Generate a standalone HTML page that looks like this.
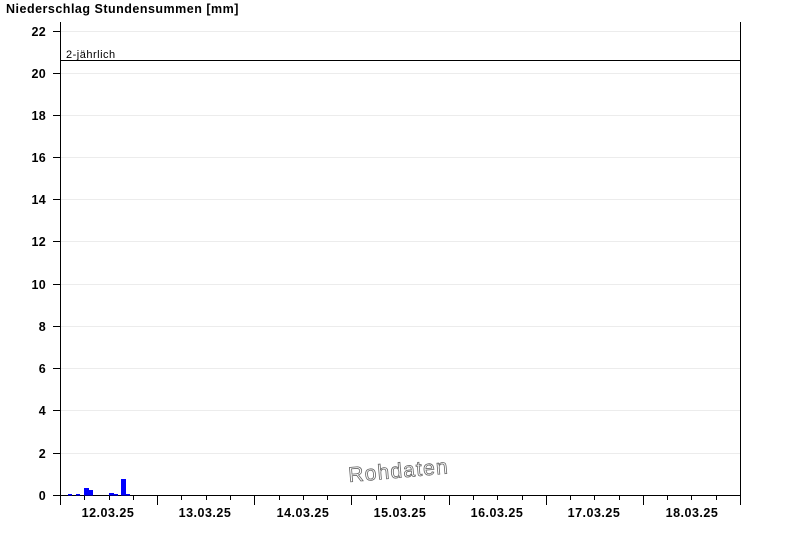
<!DOCTYPE html>
<html><head><meta charset="utf-8"><style>
html,body{margin:0;padding:0;background:#fff;}
</style></head><body>
<svg width="800" height="550" xmlns="http://www.w3.org/2000/svg" font-family="Liberation Sans, Arial, sans-serif">
<rect width="800" height="550" fill="#fff"/>
<text x="6" y="13" font-size="12.5" font-weight="bold" letter-spacing="0.5" fill="#000">Niederschlag Stundensummen [mm]</text>
<g stroke="#ececec" stroke-width="1">
<line x1="60" x2="740" y1="31.5" y2="31.5"/>
<line x1="60" x2="740" y1="73.5" y2="73.5"/>
<line x1="60" x2="740" y1="115.5" y2="115.5"/>
<line x1="60" x2="740" y1="157.5" y2="157.5"/>
<line x1="60" x2="740" y1="199.5" y2="199.5"/>
<line x1="60" x2="740" y1="241.5" y2="241.5"/>
<line x1="60" x2="740" y1="284.5" y2="284.5"/>
<line x1="60" x2="740" y1="326.5" y2="326.5"/>
<line x1="60" x2="740" y1="368.5" y2="368.5"/>
<line x1="60" x2="740" y1="410.5" y2="410.5"/>
<line x1="60" x2="740" y1="453.5" y2="453.5"/>
</g>
<g stroke="#000" stroke-width="1">
<line x1="60.5" x2="60.5" y1="22" y2="505"/>
<line x1="740.5" x2="740.5" y1="22" y2="495"/>
<line x1="53" x2="740" y1="495.5" y2="495.5"/>
<line x1="60" x2="740" y1="60.5" y2="60.5"/>
<line x1="53" x2="60" y1="31.5" y2="31.5"/>
<line x1="53" x2="60" y1="73.5" y2="73.5"/>
<line x1="53" x2="60" y1="115.5" y2="115.5"/>
<line x1="53" x2="60" y1="157.5" y2="157.5"/>
<line x1="53" x2="60" y1="199.5" y2="199.5"/>
<line x1="53" x2="60" y1="241.5" y2="241.5"/>
<line x1="53" x2="60" y1="284.5" y2="284.5"/>
<line x1="53" x2="60" y1="326.5" y2="326.5"/>
<line x1="53" x2="60" y1="368.5" y2="368.5"/>
<line x1="53" x2="60" y1="410.5" y2="410.5"/>
<line x1="53" x2="60" y1="453.5" y2="453.5"/>
<line x1="157.5" x2="157.5" y1="495" y2="505"/>
<line x1="254.5" x2="254.5" y1="495" y2="505"/>
<line x1="351.5" x2="351.5" y1="495" y2="505"/>
<line x1="449.5" x2="449.5" y1="495" y2="505"/>
<line x1="546.5" x2="546.5" y1="495" y2="505"/>
<line x1="643.5" x2="643.5" y1="495" y2="505"/>
<line x1="740.5" x2="740.5" y1="495" y2="505"/>
<g>
<line x1="84.5" x2="84.5" y1="495" y2="500"/><line x1="109.5" x2="109.5" y1="495" y2="500"/><line x1="133.5" x2="133.5" y1="495" y2="500"/>
<line x1="181.5" x2="181.5" y1="495" y2="500"/><line x1="206.5" x2="206.5" y1="495" y2="500"/><line x1="230.5" x2="230.5" y1="495" y2="500"/>
<line x1="279.5" x2="279.5" y1="495" y2="500"/><line x1="303.5" x2="303.5" y1="495" y2="500"/><line x1="327.5" x2="327.5" y1="495" y2="500"/>
<line x1="376.5" x2="376.5" y1="495" y2="500"/><line x1="400.5" x2="400.5" y1="495" y2="500"/><line x1="424.5" x2="424.5" y1="495" y2="500"/>
<line x1="473.5" x2="473.5" y1="495" y2="500"/><line x1="497.5" x2="497.5" y1="495" y2="500"/><line x1="522.5" x2="522.5" y1="495" y2="500"/>
<line x1="570.5" x2="570.5" y1="495" y2="500"/><line x1="594.5" x2="594.5" y1="495" y2="500"/><line x1="619.5" x2="619.5" y1="495" y2="500"/>
<line x1="667.5" x2="667.5" y1="495" y2="500"/><line x1="691.5" x2="691.5" y1="495" y2="500"/><line x1="716.5" x2="716.5" y1="495" y2="500"/>
</g>
</g>
<g font-size="12.5" font-weight="bold" text-anchor="end" fill="#000" letter-spacing="0.3">
<text x="46" y="36">22</text><text x="46" y="78">20</text><text x="46" y="120">18</text>
<text x="46" y="162">16</text><text x="46" y="204">14</text><text x="46" y="246">12</text>
<text x="46" y="289">10</text><text x="46" y="331">8</text><text x="46" y="373">6</text>
<text x="46" y="415">4</text><text x="46" y="458">2</text><text x="46" y="500">0</text>
</g>
<g font-size="12.5" font-weight="bold" text-anchor="middle" fill="#000" letter-spacing="0.5">
<text x="108" y="517">12.03.25</text><text x="205" y="517">13.03.25</text><text x="303" y="517">14.03.25</text>
<text x="400" y="517">15.03.25</text><text x="497" y="517">16.03.25</text><text x="594" y="517">17.03.25</text>
<text x="692" y="517">18.03.25</text>
</g>
<text x="66" y="58" font-size="11" letter-spacing="0.5" fill="#000">2-jährlich</text>
<g fill="#0000ff">
<rect x="68" y="494" width="4" height="1.5"/>
<rect x="76" y="494" width="4" height="1.5"/>
<rect x="84" y="488" width="5" height="7.5"/>
<rect x="89" y="490" width="4" height="5.5"/>
<rect x="109" y="493" width="5" height="2.5"/>
<rect x="114" y="494" width="4" height="1.5"/>
<rect x="121" y="479" width="5" height="16.5"/>
<rect x="126" y="494" width="4" height="1.5"/>
</g>
<text x="349" y="482" font-size="21" letter-spacing="1.2" fill="#fff" stroke="#666" stroke-width="0.8" transform="rotate(-5 349 482)">Rohdaten</text>
</svg>
</body></html>
